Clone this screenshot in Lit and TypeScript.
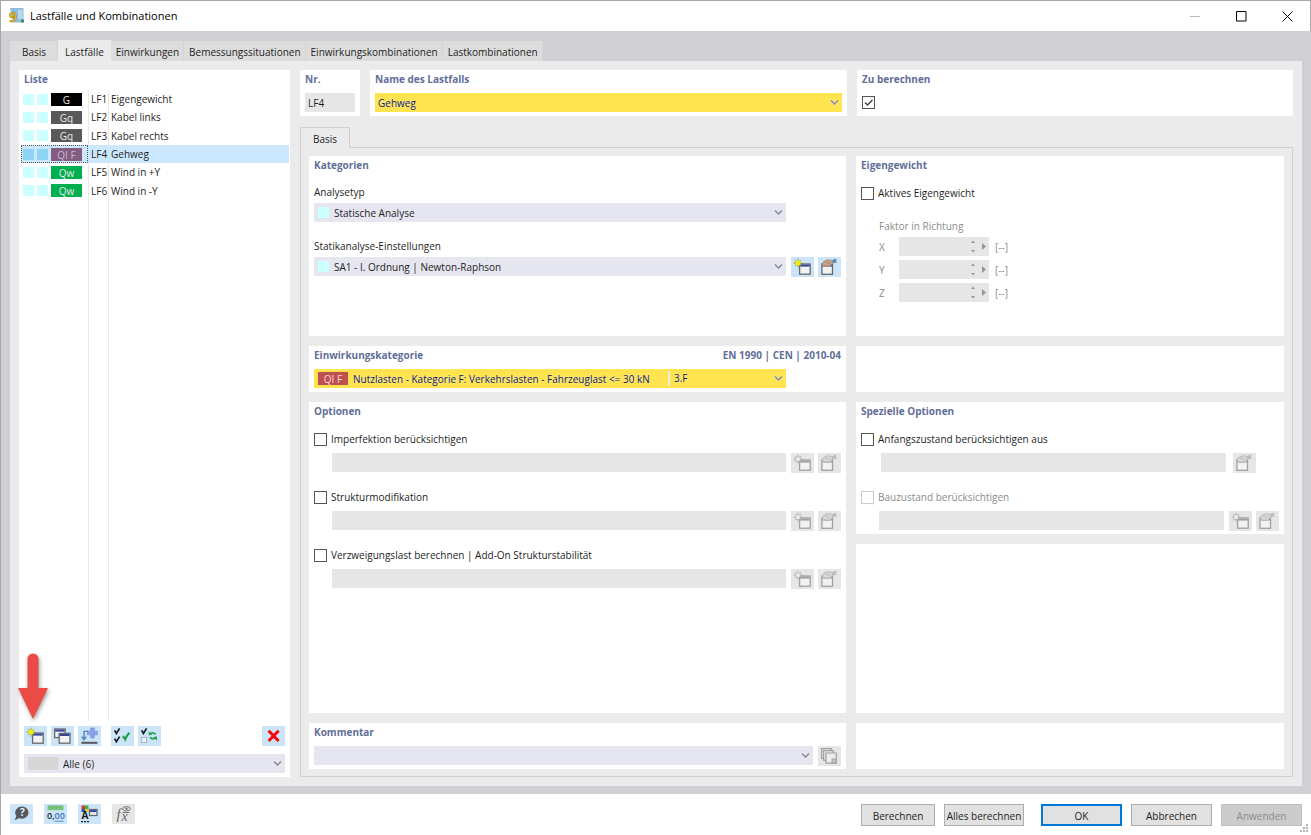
import { LitElement, html, svg, css, nothing } from "lit";
import { customElement, property, state } from "lit/decorators.js";
import { classMap } from "lit/directives/class-map.js";

/* ---------- icons, drawn on the 23 x 20 face of a tool button ---------- */

const windowShape = (x: number, y: number, w: number, h: number, off = false) => svg`
  <rect x=${x} y=${y} width=${w} height=${h} fill=${off ? "#f2f2f2" : "#f1f1f3"} stroke=${off ? "#a0a0a0" : "#66686c"} stroke-width="1.3" />
  <rect x=${x + 0.6} y=${y + 0.6} width=${w - 1.2} height="2" fill=${off ? "#a0a0a0" : "#35449a"} />`;

const newIcon = (off = false) => svg`
  ${windowShape(8.6, 7, 10.6, 10.2, off)}
  <path d="M7 1.600v9M2.600 6.100h9M4 3.100l6 6M10 3.100l-6 6" stroke=${off ? "#a6a6a6" : "#8f9448"} stroke-width="0.900" fill="none" />
  <circle cx="7" cy="6.100" r="2.500" fill=${off ? "#ececec" : "#f4f000"} stroke=${off ? "#a8a8a8" : "#d6cf1c"} stroke-width="0.600" />`;

const editIcon = (off = false) => svg`
  ${windowShape(3.9, 6.9, 10.6, 10.4, off)}
  <path d="M4.600 8.300C4.200 6 5.600 3.800 8 3.200c2-.6 4.600-.2 6.600.4l.4 3.200c-1.400.4-1.800 1-2.600 1.800-.8 1-1.600.8-2 .2-.6.8-1.400.8-1.800 0-.8.8-1.600.6-2-.2-.6.8-1.600.8-2-.3z"
    fill=${off ? "#dadada" : "#c8a58c"} stroke=${off ? "#a4a4a4" : "#9a7860"} stroke-width="0.700" />
  <path d="M6.800 5.600l2.800-.8M8.800 7.200l2.400-1M11.400 5.200l1.600.6" stroke=${off ? "#a4a4a4" : "#8c6b57"} stroke-width="0.600" />
  <path d="M14.600 3.400l1.200-1.400h2.600l-.4 2 1.200 1.800h-4.200z" fill=${off ? "#bcbcbc" : "#5b86c0"} />`;

const check = (x: number, y: number) =>
  svg`<path d="M${x} ${y}l1.800 3 3.200-5" fill="none" stroke="#16181c" stroke-width="1.700" />`;

const icons: Record<string, unknown> = {
  new: newIcon(),
  newOff: newIcon(true),
  edit: editIcon(),
  editOff: editIcon(true),
  copy: svg`${windowShape(3.6, 3, 10.6, 8.6)}${windowShape(8.2, 7.4, 10.8, 9.8)}`,
  insert: svg`
    <path d="M12.600 2h3.600v3.200h3.200v3.600h-3.200V12h-3.600V8.800h-3.200V5.200h3.200z" fill="#8aa2ea" stroke="#6f8ade" stroke-width="0.600" />
    <path d="M10 5.400H6v8.200M3.800 10.600L6 13.800l2.200-3.200" fill="none" stroke="#4f7fc4" stroke-width="1.300" />
    <path d="M3.400 16.800h16" stroke="#55575c" stroke-width="2" />`,
  checkAll: svg`${check(3.6, 4.4)}${check(3.6, 12.6)}
    <path d="M11.600 10.200c1.400.8 2 1.800 2.600 3 .8-2.400 2.200-4.400 4.200-6.400" fill="none" stroke="#1fa04b" stroke-width="2.200" />`,
  checkSwap: svg`${check(3.6, 4.4)}
    <rect x="3.600" y="11.400" width="5" height="5" fill="#eef4fa" stroke="#a9b3bd" />
    <path d="M11.600 8.400c1.800-2.200 4.400-1.800 6 0M18 11.400c-1.800 2.200-4.400 1.800-6 0" fill="none" stroke="#2aa356" stroke-width="1.800" />
    <path d="M10.600 5.400l.2 4.200 3.800-1zM19 14.400l-.2-4.200-3.800 1z" fill="#2aa356" />`,
  remove: svg`<path d="M6.600 4.800l10 10.200M16.600 4.800l-10 10.200" stroke="#fa0505" stroke-width="3" />`,
  comment: svg`
    <path d="M3.600 2.600h9.800v9.800H3.600z" fill="#e6e6e6" stroke="#a0a0a0" stroke-width="1.200" />
    <path d="M5.600 4.600h9.800v9.800H5.600z" fill="#e6e6e6" stroke="#a0a0a0" stroke-width="1.200" />
    <path d="M8 7h10.200v10.200H8z" fill="#ececec" stroke="#a0a0a0" stroke-width="1.200" />
    <rect x="14" y="13" width="4" height="4" fill="#c4c4c4" stroke="#999" stroke-width="0.800" />`,
  help: svg`
    <path d="M12.400 2.600a6.400 6 0 1 1-3 11.400L4.600 16.200l1.800-4.200A6.400 6 0 0 1 12.400 2.600z" fill="#55585c" />
    <text x="12.400" y="12.400" text-anchor="middle" font-size="10" font-weight="700" fill="#e8f2fb">?</text>`,
  decimals: svg`
    <rect x="3.500" y="1.500" width="16" height="4.600" fill="#79c47c" />
    <path d="M5.500 1.500v2M8 1.500v2M10.500 1.500v2M13 1.500v2M15.500 1.500v2M18 1.500v2" stroke="#5aa55f" stroke-width="0.600" />
    <text x="3" y="15" font-size="9" font-weight="600" fill="#26292d">0,<tspan fill="#3d74c9">00</tspan></text>
    <path d="M10.500 17.200h9" stroke="#5a8ad6" />`,
  display: svg`
    <path d="M3.500 1.500h3.500v3.500h-3.500z" fill="#d43a2f" /><path d="M7 1.500h3.500v3.500h-3.500z" fill="#3fae4a" />
    <path d="M3.500 5h3.500v3h-3.500z" fill="#2f50c8" /><path d="M7 5h3.500v3h-3.500z" fill="#e8cf27" />
    <text x="3.500" y="15.400" font-size="10" font-weight="700" fill="#1b1d20">A</text>
    <path d="M3 17.600h8" stroke="#1b1d20" stroke-width="1.400" stroke-dasharray="2 1" />
    ${windowShape(11.5, 5.5, 7.5, 6)}`,
  formula: svg`
    <text x="4.500" y="15" font-size="15" font-style="italic" class="serif" fill="#6b6b6b">f</text>
    <text x="9.500" y="16.500" font-size="14" font-style="italic" class="serif" fill="#6b6b6b">x</text>
    <ellipse cx="14.500" cy="4.800" rx="3.800" ry="2.200" fill="none" stroke="#777" /><circle cx="14.500" cy="4.800" r="1.200" fill="#777" />
    <path d="M10.500 8.500h7" stroke="#777" />`,
};

const shared = css`
  * { box-sizing: border-box; }
  button, input, select { font: inherit; color: inherit; margin: 0; border: 0; border-radius: 0; padding: 0; }
  svg { display: block; flex: none; }
`;

@customElement("tool-button")
class ToolButton extends LitElement {
  @property() icon = "new";
  @property() label = "";
  @property({ type: Boolean }) off = false;

  static styles = [shared, css`
    :host { display: block; flex: none; width: 23px; height: 20px; }
    button { display: block; width: 23px; height: 20px; background: #cce4f7; }
    button:disabled { background: #e6e6e6; }
    text { font-family: "Open Sans", sans-serif; }
    .serif { font-family: "Liberation Serif", serif; }
  `];

  render() {
    return html`<button type="button" aria-label=${this.label} ?disabled=${this.off}>
      <svg width="23" height="20" viewBox="0 0 23 20" aria-hidden="true">${icons[this.icon]}</svg>
    </button>`;
  }
}

@customElement("combo-box")
class ComboBox extends LitElement {
  @property() label = "";
  @property() value = "";
  @property() swatch = "";
  @property() badge = "";
  @property() code = "";
  @property({ type: Boolean }) accent = false;
  @property({ type: Boolean }) off = false;

  static styles = [shared, css`
    :host { display: block; flex: 1; min-width: 0; }
    .box { display: flex; align-items: center; height: 19px; padding: 0 3px; background: #e6e6f1; }
    .accent { background: #ffe450; text-shadow: 0 0 1px #e6e6f1, 0 0 1px #e6e6f1; }
    .off { background: #e6e6e6; }
    .swatch { flex: none; width: 11px; height: 11px; margin: 0 5px 0 1px; background: #ccffff; }
    .wide { width: 30px; height: 13px; background: #d6d6d6; }
    .badge { flex: none; width: 30px; height: 13px; margin: 0 5px 0 1px; background: #c0504d; color: #f6dada; line-height: 14px; text-align: center; text-shadow: none; }
    select { appearance: none; background: none; flex: 1; min-width: 0; height: 19px; outline: 0; text-shadow: inherit; opacity: 1; }
    .fit { flex: none; }
    .code { flex: 1; height: 15px; line-height: 15px; margin-left: 18px; padding-left: 4px; border-left: 2px solid #f0eee0; }
    .chevron { stroke: #8a8a92; fill: none; stroke-width: 1.5; }
    .accent .chevron { filter: drop-shadow(0 0 1px #e6e6f1); }
  `];

  render() {
    return html`<div class=${classMap({ box: true, accent: this.accent, off: this.off })}>
      ${this.swatch ? html`<span class=${classMap({ swatch: true, wide: this.swatch === "wide" })}></span>` : nothing}
      ${this.badge ? html`<span class="badge">${this.badge}</span>` : nothing}
      <select class=${classMap({ fit: !!this.code })} aria-label=${this.label} ?disabled=${this.off}><option>${this.value}</option></select>
      ${this.code ? html`<span class="code">${this.code}</span>` : nothing}
      ${this.off ? nothing : html`<svg class="chevron" width="9" height="7" viewBox="0 0 9 7" aria-hidden="true"><path d="M1 1.500l3.500 3.500 3.500-3.500" /></svg>`}
    </div>`;
  }
}

interface LoadCase { id: string; name: string; type: string; tone: string; }

@customElement("app-root")
class AppRoot extends LitElement {
  @state() private selected = "LF4";

  private tabs = ["Basis", "Lastfälle", "Einwirkungen", "Bemessungssituationen", "Einwirkungskombinationen", "Lastkombinationen"];

  private cases: LoadCase[] = [
    { id: "LF1", name: "Eigengewicht", type: "G", tone: "black" },
    { id: "LF2", name: "Kabel links", type: "Gq", tone: "gray" },
    { id: "LF3", name: "Kabel rechts", type: "Gq", tone: "gray" },
    { id: "LF4", name: "Gehweg", type: "QI F", tone: "plum" },
    { id: "LF5", name: "Wind in +Y", type: "Qw", tone: "green" },
    { id: "LF6", name: "Wind in -Y", type: "Qw", tone: "green" },
  ];

  static styles = [shared, css`
    :host { display: flex; flex-direction: column; min-height: 100vh; background: #fff; color: #1e1e1e; font: 10px/14px "Open Sans", "Noto Sans", sans-serif; border-left: 1px solid #a8a8a8; box-sizing: border-box; }
    h1, h2 { margin: 0; }
    .titlebar { display: flex; align-items: center; height: 31px; padding-left: 8px; border-top: 1px solid #a8a8a8; border-right: 1px solid #a8a8a8; }
    .titlebar h1 { flex: 1; margin-left: 5px; font: 11px/16px "Open Sans", sans-serif; color: #000; }
    .logo { overflow: visible; }
    .logo text { font: 700 14px/16px "Open Sans", sans-serif; }
    .winbtn { display: grid; place-items: center; width: 46px; height: 30px; background: none; }
    .winbtn svg { fill: none; stroke: #000; }
    .winbtn.dim svg { stroke: #bbb; }

    .frame { flex: 1; display: flex; flex-direction: column; padding: 9px 9px 8px; background: #d0cfd4; }
    .tabs { display: flex; align-items: flex-end; height: 21px; }
    .tab { height: 20px; padding: 2px 5px 0; background: #dcdcdc; white-space: nowrap; box-shadow: inset -1px 0 #d4d4d6; }
    .tab:first-child { padding: 2px 12px 0; }
    .tab.active { height: 21px; padding: 2px 7px 0; background: #ebebeb; box-shadow: none; }
    .page { flex: 1; display: grid; grid-template-columns: 271px minmax(0, 1fr); gap: 10px; padding: 9px; background: #ebebeb; }

    .card { background: #fff; padding: 2px 5px 4px; min-width: 0; }
    .card h2 { font-size: 10px; line-height: 14px; font-weight: 700; color: #5f6f99; }
    .headrow { display: flex; justify-content: space-between; }

    .sidebar { display: flex; flex-direction: column; }
    .list { position: relative; flex: 1; margin: 4px -4px 5px -3px; background: linear-gradient(#e8e8e8, #e8e8e8) 67px 0 / 1px 100% no-repeat, linear-gradient(#e8e8e8, #e8e8e8) 87px 0 / 1px 100% no-repeat; }
    table { width: 100%; height: 110px; table-layout: fixed; border-collapse: collapse; }
    td { padding: 0; white-space: nowrap; }
    .c-type { width: 67px; }
    .c-id { width: 20px; padding-left: 3px; }
    .c-name { padding-left: 3px; }
    tr.sel { background: #cce8ff; }
    tr.sel .c-type { outline: 1px dotted #555; outline-offset: -1px; }
    .marks { display: flex; align-items: center; gap: 3px; padding-left: 2px; }
    .marks i { width: 11px; height: 11px; background: #ccffff; }
    .sel .marks i { background: #8dd3f3; }
    .badge { width: 31px; height: 13px; line-height: 15px; text-align: center; color: #e8e8e8; overflow: hidden; }
    .black { background: #000; } .gray { background: #595959; } .plum { background: #835c7f; color: #c4b8d8; } .green { background: #00b050; }
    .pointer { position: absolute; left: -4px; bottom: 2px; filter: drop-shadow(1px 2px 2px #0006); }
    .tools { display: flex; gap: 4px; margin-bottom: 8px; }
    .tools .apart { margin-left: 6px; }
    .tools .end { margin-left: auto; }
    .filter { flex: none; }

    .main { display: flex; flex-direction: column; min-width: 0; }
    .top { display: grid; grid-template-columns: 60px minmax(0, 477fr) minmax(0, 436fr); gap: 10px; margin-bottom: 11px; }
    .field { margin-top: 7px; }
    .number { display: block; width: 100%; max-width: 50px; height: 19px; padding: 0 3px; background: #e6e6e6; }
    .subtab { align-self: flex-start; position: relative; height: 21px; margin-bottom: -1px; padding: 2px 12px 0; background: #ebebeb; border: 1px solid #d0d0d6; border-bottom: 0; }
    .pane { flex: 1; display: grid; grid-template-columns: minmax(0, 537fr) minmax(0, 428fr); grid-template-rows: 180px auto 1fr auto; gap: 10px; padding: 8px 8px 7px; border: 1px solid #d0d0d6; }
    .split { display: grid; grid-template-rows: 132px 1fr; gap: 10px; }

    .label { display: block; margin: 13px 0 4px; }
    .label.next { margin-top: 17px; }
    .row { display: flex; gap: 5px; height: 19px; }
    .row.short { padding-right: 55px; }
    .acts { display: flex; gap: 4px; }
    .option { margin-top: 14px; }
    .option + .option { margin-top: 18px; }
    .option .row { padding-left: 18px; margin-top: 7px; }
    .inset .row { padding-left: 20px; padding-right: 23px; gap: 7px; }
    .check { display: flex; align-items: center; gap: 4px; height: 14px; }
    .check.field { height: 19px; }
    .check input { appearance: none; flex: none; width: 13px; height: 13px; background: #fff; border: 1px solid #555; }
    .check input:disabled { border-color: #ccc; }
    .tick { display: grid; }
    .tick > * { grid-area: 1 / 1; }
    .tick svg { fill: none; stroke: #444; stroke-width: 1.5; pointer-events: none; }
    .muted { color: #8c8c8c; }
    .factors { margin: 19px 0 0 18px; color: #8c8c8c; }
    .factor { display: grid; grid-template-columns: 20px 90px auto; align-items: center; margin-top: 4px; }
    .spin { display: flex; align-items: center; height: 19px; padding-right: 2px; background: #e6e6e6; }
    .spin input { flex: 1; min-width: 0; height: 19px; background: none; }
    .factor output { padding-left: 6px; }

    .footer { display: flex; align-items: flex-start; gap: 11px; height: 41px; padding: 10px 9px 0; position: relative; }
    .footer .space { flex: 1; }
    .pushes { display: flex; gap: 9px; }
    .push { width: 81px; height: 22px; padding-top: 1px; background: #e1e1e1; border: 1px solid #adadad; white-space: nowrap; }
    .push.small { width: 74px; }
    .push.mid { width: 80px; margin-right: 8px; }
    .push.main-act { border: 2px solid #0078d7; }
    .push:disabled { background: #cccccc; border-color: #bfbfbf; color: #8c8c8c; }
    .grip { position: absolute; right: 2px; bottom: 2px; }
  `];

  private check(text: string, off = false) {
    return html`<label class=${classMap({ check: true, muted: off })}><input type="checkbox" ?disabled=${off} /><span>${text}</span></label>`;
  }

  private option(text: string) {
    return html`<div class="option">${this.check(text)}
      <div class="row"><combo-box label=${text} off></combo-box>
        <div class="acts"><tool-button icon="newOff" label="Neu" off></tool-button><tool-button icon="editOff" label="Bearbeiten" off></tool-button></div>
      </div></div>`;
  }

  private factor(axis: string) {
    return html`<div class="factor"><label for=${"f" + axis}>${axis}</label>
      <div class="spin"><input id=${"f" + axis} type="text" disabled />
        <svg width="17" height="13" viewBox="0 0 17 13" fill="#969696" aria-hidden="true"><path d="M1 3h4l-2-2.400zM1 10h4l-2 2.400zM12 3v7l4-3.500z" /></svg></div>
      <output>[--]</output></div>`;
  }

  render() {
    return html`
      <header class="titlebar">
        <svg class="logo" width="16" height="16" viewBox="0 0 16 16" aria-hidden="true">
          <path d="M1 0h13.500v14.500h-10z" fill="#8dbfe0" /><path d="M9 2h4.500v9h-4.500z" fill="#b9d8ea" /><path d="M12 11.500h3v3h-3z" fill="#3d8f5f" />
          <text x="0" y="14" fill="#ecc02a" stroke="#8a7024" stroke-width="0.500">9</text>
        </svg>
        <h1>Lastfälle und Kombinationen</h1>
        <button class="winbtn dim" aria-label="Minimieren"><svg width="11" height="11"><path d="M0 5.500h10" /></svg></button>
        <button class="winbtn" aria-label="Maximieren"><svg width="11" height="11"><path d="M.5.500h9.500v9.500H.500z" /></svg></button>
        <button class="winbtn" aria-label="Schließen"><svg width="11" height="11"><path d="M.5.500l10 10M10.500.500l-10 10" /></svg></button>
      </header>

      <div class="frame">
        <nav class="tabs">${this.tabs.map((t) => html`<button class=${classMap({ tab: true, active: t === "Lastfälle" })}>${t}</button>`)}</nav>
        <div class="page">
          <section class="card sidebar">
            <h2>Liste</h2>
            <div class="list">
              <table><tbody>${this.cases.map((c) => html`
                <tr class=${classMap({ sel: c.id === this.selected })} @click=${() => (this.selected = c.id)}>
                  <td class="c-type"><div class="marks"><i></i><i></i><span class="badge ${c.tone}">${c.type}</span></div></td>
                  <td class="c-id">${c.id}</td><td class="c-name">${c.name}</td>
                </tr>`)}</tbody></table>
              <svg class="pointer" width="32" height="66" viewBox="0 0 32 66" aria-hidden="true"><path d="M10.500 6a5.500 5.500 0 0 1 11 0v29H31L16 66 1 35h9.500z" fill="#ea4b45" /></svg>
            </div>
            <div class="tools">
              <tool-button icon="new" label="Neu"></tool-button><tool-button icon="copy" label="Kopieren"></tool-button><tool-button icon="insert" label="Einfügen"></tool-button>
              <tool-button class="apart" icon="checkAll" label="Alle auswählen"></tool-button><tool-button icon="checkSwap" label="Auswahl umkehren"></tool-button>
              <tool-button class="end" icon="remove" label="Löschen"></tool-button>
            </div>
            <combo-box class="filter" label="Filter" value="Alle (6)" swatch="wide"></combo-box>
          </section>

          <main class="main">
            <div class="top">
              <section class="card"><h2><label for="nr">Nr.</label></h2><input id="nr" class="number field" value="LF4" readonly /></section>
              <section class="card"><h2>Name des Lastfalls</h2><combo-box class="field" label="Name des Lastfalls" value="Gehweg" accent></combo-box></section>
              <section class="card"><h2>Zu berechnen</h2>
                <label class="check field"><span class="tick"><input type="checkbox" checked aria-label="Zu berechnen" />
                  <svg width="13" height="13" viewBox="0 0 13 13" aria-hidden="true"><path d="M3 6.500l2.500 2.500 5-5" /></svg></span></label></section>
            </div>

            <button class="subtab">Basis</button>
            <div class="pane">
              <section class="card"><h2>Kategorien</h2>
                <span class="label">Analysetyp</span>
                <div class="row short"><combo-box label="Analysetyp" value="Statische Analyse" swatch="small"></combo-box></div>
                <span class="label next">Statikanalyse-Einstellungen</span>
                <div class="row"><combo-box label="Statikanalyse-Einstellungen" value="SA1 - I. Ordnung | Newton-Raphson" swatch="small"></combo-box>
                  <div class="acts"><tool-button icon="new" label="Neu"></tool-button><tool-button icon="edit" label="Bearbeiten"></tool-button></div></div>
              </section>
              <section class="card"><h2>Eigengewicht</h2>
                <div class="option">${this.check("Aktives Eigengewicht")}</div>
                <div class="factors">Faktor in Richtung${["X", "Y", "Z"].map((a) => this.factor(a))}</div>
              </section>

              <section class="card"><div class="headrow"><h2>Einwirkungskategorie</h2><h2>EN 1990 | CEN | 2010-04</h2></div>
                <div class="row short field"><combo-box label="Einwirkungskategorie" badge="QI F" code="3.F" accent value="Nutzlasten - Kategorie F: Verkehrslasten - Fahrzeuglast &lt;= 30 kN"></combo-box></div>
              </section>
              <section class="card"></section>

              <section class="card"><h2>Optionen</h2>
                ${this.option("Imperfektion berücksichtigen")}${this.option("Strukturmodifikation")}${this.option("Verzweigungslast berechnen | Add-On Strukturstabilität")}
              </section>
              <div class="split">
                <section class="card"><h2>Spezielle Optionen</h2>
                  <div class="option inset">${this.check("Anfangszustand berücksichtigen aus")}
                    <div class="row"><combo-box label="Anfangszustand" off></combo-box><tool-button icon="editOff" label="Bearbeiten" off></tool-button></div></div>
                  <div class="option">${this.check("Bauzustand berücksichtigen", true)}
                    <div class="row"><combo-box label="Bauzustand" off></combo-box>
                      <div class="acts"><tool-button icon="newOff" label="Neu" off></tool-button><tool-button icon="editOff" label="Bearbeiten" off></tool-button></div></div></div>
                </section>
                <section class="card"></section>
              </div>

              <section class="card"><h2>Kommentar</h2>
                <div class="row field"><combo-box label="Kommentar"></combo-box><tool-button icon="comment" label="Kommentare" off></tool-button></div>
              </section>
              <section class="card"></section>
            </div>
          </main>
        </div>
      </div>

      <footer class="footer">
        <tool-button icon="help" label="Hilfe"></tool-button><tool-button icon="decimals" label="Einheiten"></tool-button><tool-button icon="display" label="Anzeige"></tool-button><tool-button icon="formula" label="Formel" off></tool-button>
        <span class="space"></span>
        <div class="pushes">
          <button class="push small">Berechnen</button><button class="push mid">Alles berechnen</button>
          <button class="push main-act">OK</button><button class="push">Abbrechen</button><button class="push" disabled>Anwenden</button>
        </div>
        <svg class="grip" width="9" height="9" viewBox="0 0 9 9" fill="#b4b4b4" aria-hidden="true"><path d="M6 0h2v2H6zM6 3h2v2H6zM6 6h2v2H6zM3 3h2v2H3zM3 6h2v2H3zM0 6h2v2H0z" /></svg>
      </footer>`;
  }
}
